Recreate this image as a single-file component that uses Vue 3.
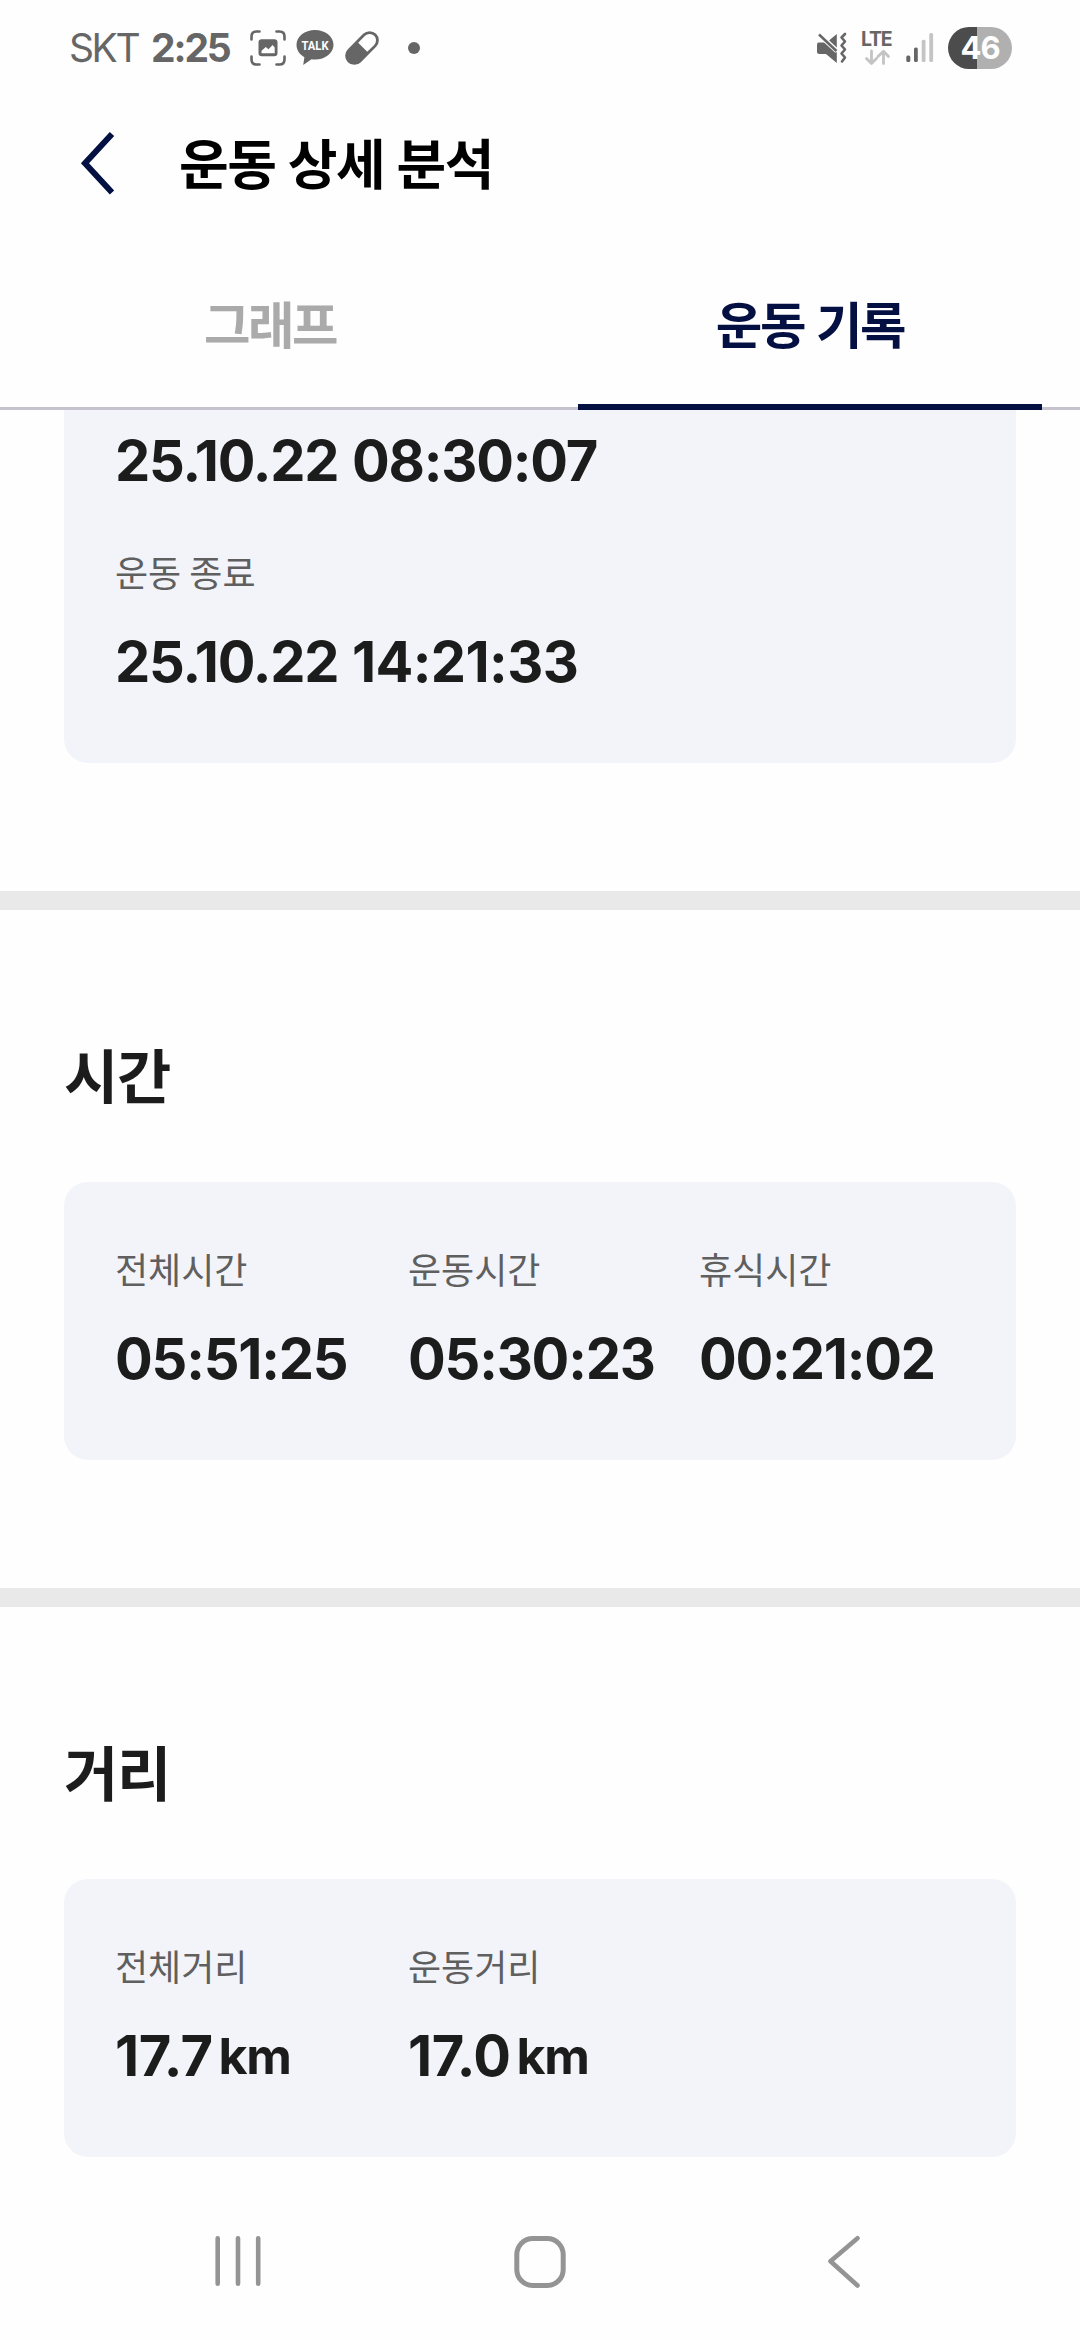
<script setup>
const sections = [
  {
    title: '시간',
    items: [
      { label: '전체시간', value: '05:51:25' },
      { label: '운동시간', value: '05:30:23' },
      { label: '휴식시간', value: '00:21:02' },
    ],
  },
  {
    title: '거리',
    items: [
      { label: '전체거리', value: '17.7', unit: 'km' },
      { label: '운동거리', value: '17.0', unit: 'km' },
    ],
  },
]
</script>

<template>
  <div class="screen">
    <header class="status">
      <span class="carrier">SKT</span>
      <span class="clock">2:25</span>
      <svg class="capture" width="36" height="36" viewBox="0 0 36 36">
        <path d="M1.5 9.5V6.5Q1.5 1.5 6.500 1.500H9.500M26.500 1.500H29.500Q34.500 1.500 34.500 6.500V9.500M34.500 26.500V29.500Q34.500 34.500 29.500 34.500H26.500M9.500 34.500H6.500Q1.500 34.500 1.500 29.500V26.500" fill="none" stroke="#666" stroke-width="2.600" stroke-linecap="round" />
        <rect x="8.500" y="9.300" width="19" height="17" rx="3.200" fill="#666" />
        <path d="M11.500 23.300V20.800L15.800 17L18.500 19.200L22.600 15L24.700 17.500V23.300Z" fill="#fff" />
      </svg>
      <svg class="talk" width="38" height="36" viewBox="0 0 38 36">
        <path d="M19 0C8.700 0 .5 6.500.5 14.800C.5 20 3.500 24.500 8.400 27.200L7.200 35L15.500 29.300Q17 29.600 19 29.600C29.300 29.600 37.500 23.100 37.500 14.800S29.300 0 19 0Z" fill="#666" />
        <text x="19" y="20.200" text-anchor="middle" textLength="27" lengthAdjust="spacingAndGlyphs" font-size="13" font-weight="700" font-family="Roboto, sans-serif" fill="#fff">TALK</text>
      </svg>
      <svg class="pill" width="38" height="36" viewBox="0 0 38 36">
        <g transform="rotate(-45 19 18)">
          <rect x="-1" y="8.800" width="40" height="18.400" rx="9.200" fill="#666" />
          <path d="M20 11.600H29.800A6.400 6.400 0 0 1 29.800 24.400H20Z" fill="#fff" />
        </g>
      </svg>
      <i class="dot"></i>
      <div class="status-right">
        <svg width="32" height="32" viewBox="0 0 32 32">
          <path d="M2.500 10.500H9L20.800 20.500V31L10 22H3.500Q1 22 1 19.500V13.500Q1 10.500 2.500 10.500ZM13 8.500L20.800 2V16.500Z" fill="#666" />
          <path d="M3.500 3L21 19" fill="none" stroke="#fff" stroke-width="5" />
          <path d="M3 2.500L20.500 19" fill="none" stroke="#666" stroke-width="2.500" />
          <path d="M29 2L25.500 5.500L29 9.500L25.500 13.500L29 17.500L25.500 21.500L29 25.500L26 29.500" fill="none" stroke="#666" stroke-width="2.600" stroke-linecap="round" stroke-linejoin="round" />
        </svg>
        <div class="network">
          <span>LTE</span>
          <svg width="34" height="18" viewBox="0 18 34 18">
            <path d="M10.500 20V32M5.500 27.500L10.500 32.500L15.500 27.500M22.500 32.500V20.500M17 25.500L22.500 20.200L27.500 25.500" fill="none" stroke="#c4c4c4" stroke-width="2.800" stroke-linecap="round" stroke-linejoin="round" />
          </svg>
        </div>
        <svg class="signal" width="28" height="30" viewBox="0 0 28 30">
          <g fill="#666"><rect x=".3" y="22.500" width="4" height="6.500" rx="1.500" /><rect x="8" y="14.500" width="3.800" height="14.500" rx="1.500" /></g>
          <g fill="#c4c4c4"><rect x="15.700" y="6.800" width="3.800" height="22.200" rx="1.500" /><rect x="23.300" y="0" width="3.800" height="29" rx="1.500" /></g>
        </svg>
        <span class="battery">46</span>
      </div>
    </header>

    <div class="titlebar">
      <svg width="40" height="70" viewBox="0 0 40 70">
        <path d="M34 6L7 35.200L34 64.500" fill="none" stroke="#041042" stroke-width="6" />
      </svg>
      <h1>운동 상세 분석</h1>
    </div>

    <nav class="tabs">
      <div class="tab">그래프</div>
      <div class="tab active">운동 기록</div>
    </nav>

    <main>
      <section class="card first">
        <div class="value">25.10.22 08:30:07</div>
        <div class="label">운동 종료</div>
        <div class="value">25.10.22 <span class="end-time">14:21:33</span></div>
      </section>

      <section v-for="s in sections" :key="s.title" class="section">
        <h2>{{ s.title }}</h2>
        <div class="card grid">
          <div v-for="item in s.items" :key="item.label">
            <div class="label">{{ item.label }}</div>
            <div class="value" :class="{ distance: item.unit }">{{ item.value }}<span v-if="item.unit" class="unit">{{ item.unit }}</span></div>
          </div>
        </div>
      </section>
    </main>

    <footer class="navbar">
      <svg width="60" height="60" viewBox="0 0 60 60">
        <path d="M9.700 8.300V53.700M30 8.300V53.700M50.200 8.300V53.700" stroke="#949494" stroke-width="4.600" stroke-linecap="round" />
      </svg>
      <svg width="60" height="60" viewBox="0 0 60 60">
        <rect x="6.800" y="8.500" width="46.400" height="47" rx="16" fill="none" stroke="#949494" stroke-width="5" />
      </svg>
      <svg width="60" height="60" viewBox="0 0 60 60">
        <path d="M45.500 8.300L18.500 31.200L45.500 55.500" fill="none" stroke="#949494" stroke-width="4.600" stroke-linecap="round" stroke-linejoin="round" />
      </svg>
    </footer>
  </div>
</template>

<style>
body {
  margin: 0;
  background: #fefefe;
}
</style>

<style scoped>
* {
  box-sizing: border-box;
}
.screen {
  width: 1080px;
  height: 2340px;
  display: flex;
  flex-direction: column;
  overflow: hidden;
  background: #fefefe;
  font-family: "Noto Sans CJK KR", sans-serif;
  color: #1c1c1c;
}
svg {
  display: block;
  flex: none;
}
.status {
  height: 96px;
  padding: 0 68px 0 69px;
  display: flex;
  align-items: center;
  color: #666;
  white-space: nowrap;
}
.carrier {
  width: 82px;
  font: 400 39px/48px Inter, sans-serif;
  letter-spacing: -2.4px;
}
.clock {
  width: 99px;
  font: 700 39px/48px Inter, sans-serif;
  letter-spacing: -2.1px;
}
.capture { margin-right: 10px; }
.talk { margin-right: 9px; }
.pill { margin-right: 27px; }
.dot {
  width: 12px;
  height: 12px;
  border-radius: 50%;
  background: #666;
}
.status-right {
  margin-left: auto;
  display: flex;
  align-items: center;
}
.network {
  width: 34px;
  margin-left: 13px;
}
.network span {
  display: block;
  width: 34px;
  padding-left: 0;
  font: 700 19.500px/20px Inter, sans-serif;
  letter-spacing: -1.2px;
}
.signal { margin-left: 11px; }
.battery {
  width: 64px;
  height: 42px;
  margin-left: 14px;
  border-radius: 21px;
  background: linear-gradient(90deg, #4c4c4c 29px, #b0b0b0 29px);
  color: #fff;
  text-align: center;
  font: 700 31px/42px Inter, sans-serif;
  letter-spacing: -1px;
}
.titlebar {
  height: 134px;
  padding-left: 78px;
  display: flex;
  align-items: center;
}
h1 {
  margin: -3px 0 0 61px;
  font-size: 54px;
  font-weight: 700;
  line-height: 80px;
  letter-spacing: -1.35px;
  word-spacing: 1.2px;
  color: #000;
}
.tabs {
  flex: none;
  height: 180px;
  border-bottom: 3px solid #c6c3cf;
  padding: 0 38px;
  display: flex;
  justify-content: space-between;
}
.tab {
  width: 464px;
  height: 180px;
  padding-top: 52px;
  text-align: center;
  font-size: 50.5px;
  font-weight: 700;
  line-height: 80px;
  letter-spacing: -2.4px;
  word-spacing: 3px;
  color: #aaa;
}
.tab.active {
  color: #041042;
  border-bottom: 6px solid #041042;
}
main {
  height: 1750px;
  overflow: hidden;
}
.card {
  margin: 0 64px;
  padding: 58px 51px 0;
  height: 278px;
  border-radius: 24px;
  background: #f3f4f9;
}
.card.first {
  height: 353px;
  padding-top: 17px;
  margin-bottom: 128px;
  border-radius: 0 0 24px 24px;
}
.label {
  font-size: 36px;
  line-height: 56px;
  color: #5f5f5f;
}
.first .label {
  margin-top: 48px;
}
.value {
  font: 700 56px/68px Inter, sans-serif;
  letter-spacing: -1.2px;
  word-spacing: 1.5px;
  white-space: nowrap;
}
.label + .value {
  margin-top: 29px;
}
.end-time {
  letter-spacing: -0.6px;
}
.distance {
  letter-spacing: -0.5px;
}
.unit {
  margin-left: 6px;
  font-size: 50px;
  letter-spacing: -1.2px;
  position: relative;
  top: -2px;
}
.section {
  height: 697px;
  border-top: 19px solid #e9e9e9;
}
h2 {
  margin: 0;
  padding: 120px 0 0 64px;
  height: 272px;
  font-size: 59px;
  font-weight: 700;
  line-height: 88px;
  letter-spacing: -1.2px;
}
.grid {
  display: grid;
  grid-template-columns: 293px 291px 1fr;
}
.navbar {
  flex: none;
  height: 180px;
  padding: 70px 208px 0;
  display: flex;
  justify-content: space-between;
}
</style>
